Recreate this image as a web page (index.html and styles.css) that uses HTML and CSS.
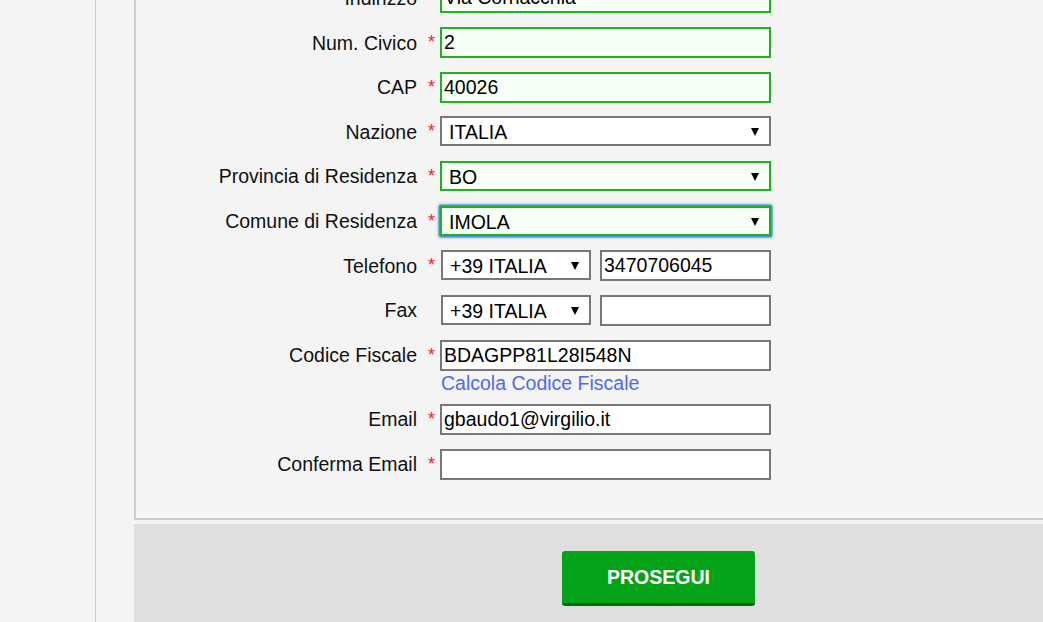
FILE: index.html
```html
<!DOCTYPE html>
<html lang="it">
<head>
<meta charset="utf-8">
<title>Registrazione</title>
<link rel="stylesheet" href="styles.css">
</head>
<body>
<div class="page">
  <div class="sidebar"></div>
  <div class="main">
    <div class="form-box">
      <div class="rows">
        <div class="row">
          <label class="label">Indirizzo</label><span class="star">*</span>
          <div class="field"><input class="input valid" type="text" value="Via Cornacchia"></div>
        </div>
        <div class="row">
          <label class="label">Num. Civico</label><span class="star">*</span>
          <div class="field"><input class="input valid" type="text" value="2"></div>
        </div>
        <div class="row">
          <label class="label">CAP</label><span class="star">*</span>
          <div class="field"><input class="input valid" type="text" value="40026"></div>
        </div>
        <div class="row">
          <label class="label">Nazione</label><span class="star">*</span>
          <div class="field"><span class="select-wrap"><select class="select"><option>ITALIA</option></select></span></div>
        </div>
        <div class="row">
          <label class="label">Provincia di Residenza</label><span class="star">*</span>
          <div class="field"><span class="select-wrap"><select class="select valid"><option>BO</option></select></span></div>
        </div>
        <div class="row">
          <label class="label">Comune di Residenza</label><span class="star">*</span>
          <div class="field"><span class="select-wrap"><select class="select valid focused"><option>IMOLA</option></select></span></div>
        </div>
        <div class="row">
          <label class="label">Telefono</label><span class="star">*</span>
          <div class="field field-inline">
            <span class="select-wrap prefix"><select class="select select-prefix"><option>+39 ITALIA</option></select></span>
            <input class="input input-phone" type="text" value="3470706045">
          </div>
        </div>
        <div class="row">
          <label class="label">Fax</label><span class="star"></span>
          <div class="field field-inline">
            <span class="select-wrap prefix"><select class="select select-prefix"><option>+39 ITALIA</option></select></span>
            <input class="input input-phone" type="text" value="">
          </div>
        </div>
        <div class="row row-tall">
          <label class="label">Codice Fiscale</label><span class="star">*</span>
          <div class="field field-stack">
            <input class="input" type="text" value="BDAGPP81L28I548N">
            <a class="link" href="#">Calcola Codice Fiscale</a>
          </div>
        </div>
        <div class="row">
          <label class="label">Email</label><span class="star">*</span>
          <div class="field"><input class="input" type="text" value="gbaudo1@virgilio.it"></div>
        </div>
        <div class="row row-last">
          <label class="label">Conferma Email</label><span class="star">*</span>
          <div class="field"><input class="input" type="text" value=""></div>
        </div>
      </div>
    </div>
    <div class="footer">
      <button class="btn" type="button">PROSEGUI</button>
    </div>
  </div>
</div>
</body>
</html>
```
FILE: styles.css
```css
html, body {
  margin: 0;
  padding: 0;
  height: 100%;
  overflow: hidden;
}
body {
  background: #f4f4f4;
  font-family: "Liberation Sans", Arial, sans-serif;
  font-size: 19.5px;
  color: #111;
}
.page {
  display: flex;
  min-height: 622px;
}
.sidebar {
  width: 95px;
  flex-shrink: 0;
  border-right: 1px solid #cfcfcf;
}
.main {
  flex-shrink: 0;
  width: 1049px;
  margin-left: 38px;
  display: flex;
  flex-direction: column;
}
.form-box {
  border-left: 2px solid #cccccc;
  border-bottom: 2px solid #cccccc;
  padding-bottom: 38px;
}
.rows {
  margin-top: -17.667px;
}
.row {
  display: grid;
  grid-template-columns: 281px 23px 1fr;
  align-items: start;
  height: 44.667px;
}
.row-tall {
  height: 64.333px;
}
.row-last {
  height: 31px;
}
.label {
  text-align: right;
  line-height: 22px;
  padding-top: 4.5px;
  color: #111;
}
.star {
  color: #f0202a;
  line-height: 22px;
  padding-top: 4px;
  padding-left: 11px;
  font-size: 18px;
}
.field {
  display: flex;
}
.field-inline {
  align-items: flex-start;
}
.field-stack {
  flex-direction: column;
  align-items: flex-start;
}
.input {
  box-sizing: border-box;
  width: 331px;
  height: 31px;
  margin: 0;
  padding: 0 2px;
  border: 2px solid #777777;
  border-radius: 0;
  background: #ffffff;
  font-family: "Liberation Sans", Arial, sans-serif;
  font-size: 19.5px;
  color: #000;
  outline: none;
}
.input.valid,
.select.valid {
  border-color: #1fb11f;
  background: #f7fff7;
}
.input-phone {
  width: 171px;
  margin-left: 9px;
}
.select-wrap {
  position: relative;
  display: inline-block;
}
.select-wrap::after {
  content: "";
  position: absolute;
  right: 12px;
  top: 50%;
  margin-top: -3px;
  border-left: 4.5px solid transparent;
  border-right: 4.5px solid transparent;
  border-top: 8px solid #000;
  pointer-events: none;
}
.select {
  -webkit-appearance: none;
  appearance: none;
  box-sizing: border-box;
  display: block;
  width: 331px;
  height: 30px;
  margin: 0;
  padding: 2px 28px 0 7px;
  border: 2px solid #777777;
  border-radius: 0;
  background: #ffffff;
  font-family: "Liberation Sans", Arial, sans-serif;
  font-size: 19.5px;
  color: #000;
  outline: none;
}
.select.focused {
  box-shadow: 0 0 0 1.5px #4f8fe2, 0 0 3px 1.5px rgba(80, 140, 230, 0.55);
  border-radius: 1px;
}
.prefix {
  margin-left: 1px;
}
.select-prefix {
  width: 150px;
}
.link {
  color: #5068f2;
  text-decoration: none;
  line-height: 18px;
  margin-top: 3px;
  padding-left: 1px;
}
.footer {
  margin-top: 4px;
  flex: 1;
  background: #dfdfdf;
  padding-top: 27px;
  text-align: center;
}
.btn {
  width: 193px;
  height: 55px;
  margin: 0;
  padding: 0 0 3px;
  border: none;
  border-bottom: 3px solid #046b10;
  border-radius: 3px;
  background: #04a219;
  color: #ffffff;
  font-family: "Liberation Sans", Arial, sans-serif;
  font-size: 19.5px;
  font-weight: bold;
  line-height: 52px;
  cursor: pointer;
}
```
